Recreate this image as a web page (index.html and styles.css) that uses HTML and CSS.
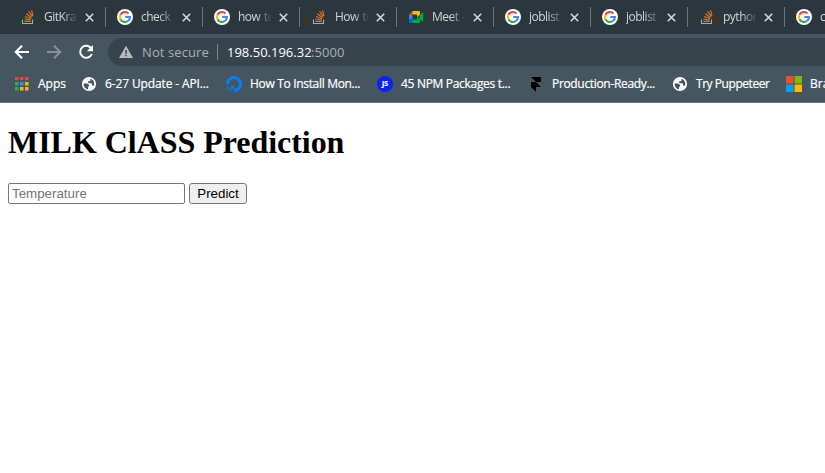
FILE: index.html
```html
<!DOCTYPE html>
<html lang="en">
<head>
<meta charset="utf-8">
<title>MILK ClASS Prediction</title>
<link rel="stylesheet" href="styles.css">
</head>
<body>
<svg class="defs" width="0" height="0">
  <symbol id="google" viewBox="0 0 16 16">
    <circle cx="8" cy="8" r="8" fill="#fff"/>
    <g fill="none" stroke-width="2.1">
      <path d="M11.5 4.4A5 5 0 0 0 3.5 5.8" stroke="#ea4335"/>
      <path d="M3.5 5.8A5 5 0 0 0 3.5 10.2" stroke="#fbbc05"/>
      <path d="M3.5 10.2A5 5 0 0 0 11.2 11.8" stroke="#34a853"/>
      <path d="M11.2 11.8A4.8 4.8 0 0 0 12.9 8H8.2" stroke="#4285f4"/>
    </g>
  </symbol>
  <symbol id="stack" viewBox="0 0 16 16">
    <path d="M2.5 10.5v4h10v-4" fill="none" stroke="#a5abae" stroke-width="1.1"/>
    <path d="M4.4 12.4h6.3M4.5 10l6.3 1M5 7.500l6 2.300M6.400 4.700l5.100 4M8.600 2.400l3.700 5.200M11.500 1.300l1.400 5.600" fill="none" stroke="#e8701a" stroke-width="1.2"/>
  </symbol>
  <symbol id="meet" viewBox="0 0 16 16">
    <path d="M4.500 2v3.500H1z" fill="#ea4335"/>
    <path d="M1 5.500h3.500v5H1z" fill="#2684fc"/>
    <path d="M1 10.500h3.500V14H2a1 1 0 0 1-1-1z" fill="#0066da"/>
    <path d="M4.500 2H11a1 1 0 0 1 1 1v4L9 8V5.500H4.500z" fill="#ffba00"/>
    <path d="M4.500 10.500H9V8l3-2 2.400-2.500q.800-.500.800.300v8.400q0 .800-.800.300L12 10.500V13a1 1 0 0 1-1 1H4.500z" fill="#00ac47"/>
    <path d="M9 8l3-2.500v5z" fill="#00832d"/>
  </symbol>
  <symbol id="globe" viewBox="0 0 16 16">
    <circle cx="8" cy="8" r="7.100" fill="#fff"/>
    <path d="M2.600 7.400h2.800c1.600 0 2.600.900 2.600 2.100s-1 1.300-1 2v1.800c-2.500-.300-4.500-2.600-4.400-5.900z" fill="#455660"/>
    <path d="M9.500 2.700v1.200c0 .900-.700 1.300-1.600 1.300-.900 0-1.100.500-1.100 1.100 0 .700.600.900 1.500.900h1.500c1 0 1.300.700 1.300 1.500 0 .700.400 1 1.200 1h.700c.900-2.800-.400-6-3.500-7z" fill="#455660"/>
  </symbol>
  <symbol id="x" viewBox="0 0 9 9"><path d="M.8.8l7.400 7.400M8.200.8L.8 8.200"/></symbol>
</svg>

<header class="browser">
  <nav class="tabs">
    <div class="tab"><svg class="fav"><use href="#stack"/></svg><span class="name">GitKra</span><svg class="close"><use href="#x"/></svg></div>
    <div class="tab"><svg class="fav"><use href="#google"/></svg><span class="name">check</span><svg class="close"><use href="#x"/></svg></div>
    <div class="tab"><svg class="fav"><use href="#google"/></svg><span class="name">how to</span><svg class="close"><use href="#x"/></svg></div>
    <div class="tab"><svg class="fav"><use href="#stack"/></svg><span class="name">How to</span><svg class="close"><use href="#x"/></svg></div>
    <div class="tab"><svg class="fav"><use href="#meet"/></svg><span class="name">Meet -</span><svg class="close"><use href="#x"/></svg></div>
    <div class="tab"><svg class="fav"><use href="#google"/></svg><span class="name">joblist</span><svg class="close"><use href="#x"/></svg></div>
    <div class="tab"><svg class="fav"><use href="#google"/></svg><span class="name">joblist</span><svg class="close"><use href="#x"/></svg></div>
    <div class="tab"><svg class="fav"><use href="#stack"/></svg><span class="name">pythor</span><svg class="close"><use href="#x"/></svg></div>
    <div class="tab"><svg class="fav"><use href="#google"/></svg><span class="name">c</span></div>
  </nav>

  <div class="toolbar">
    <svg class="nav" viewBox="0 0 16 16"><path d="M15 8H2M8 1.700L1.700 8 8 14.300"/></svg>
    <svg class="nav dim" viewBox="0 0 16 16"><path d="M1 8h13M8 1.700L14.300 8 8 14.300"/></svg>
    <svg class="nav" viewBox="0 0 16 16"><path d="M13.300 4.600A6 6 0 1 0 13.800 10"/><path class="solid" d="M15 1v6.200H8.800z"/></svg>
    <div class="omnibox">
      <svg class="warn" viewBox="0 0 14 14"><path d="M7 .7L14 13H0z" fill="#b5bbbe"/><path d="M6.300 5h1.500v3.700H6.300zM6.300 9.800h1.500v1.500H6.300z" fill="#37444c"/></svg>
      <span class="secure">Not secure</span>
      <span class="bar"></span>
      <span class="host">198.50.196.32</span><span class="port">:5000</span>
    </div>
  </div>

  <nav class="bookmarks">
    <a class="bm apps"><svg viewBox="0 0 16 16"><path d="M1 1h3.500v3H1zM6 1h3.500v3H6zM11 1h3.500v3H11z" fill="#f44336"/><path d="M1 6h3.500v3.500H1zM1 11h3.500v3.500H1z" fill="#34a853"/><path d="M6 6h3.500v3.500H6z" fill="#2196f3"/><path d="M6 11h3.500v3.500H6zM11 6h3.500v3.500H11zM11 11h3.500v3.500H11z" fill="#fbb605"/></svg><span>Apps</span></a>
    <a class="bm update"><svg><use href="#globe"/></svg><span>6-27 Update - API...</span></a>
    <a class="bm mongo"><svg viewBox="0 0 16 16"><path d="M1.500 8A6.500 6.500 0 1 1 8 14.500" fill="none" stroke="#0080ff" stroke-width="3"/><path d="M5 10h3v3H5zM3 13h2v2H3zM1 11h2v2H1z" fill="#0080ff"/></svg><span>How To Install Mon...</span></a>
    <a class="bm npm"><i class="js">JS</i><span>45 NPM Packages t...</span></a>
    <a class="bm prod"><svg viewBox="0 0 16 16"><path d="M3 1h10v5H8zM3 6h5l5 5H8v5l-5-5z" fill="#000"/></svg><span>Production-Ready...</span></a>
    <a class="bm pup"><svg><use href="#globe"/></svg><span>Try Puppeteer</span></a>
    <a class="bm last"><svg viewBox="0 0 16 16"><path d="M0 0h7.500v7.500H0z" fill="#f25022"/><path d="M8.500 0H16v7.500H8.500z" fill="#7fba00"/><path d="M0 8.500h7.500V16H0z" fill="#00a4ef"/><path d="M8.500 8.500H16V16H8.500z" fill="#ffb900"/></svg><span>Bra</span></a>
  </nav>
</header>

<main class="page">
  <h1>MILK ClASS Prediction</h1>
  <form class="form"><input class="field" type="text" placeholder="Temperature"><button class="predict" type="button">Predict</button></form>
</main>
</body>
</html>
```
FILE: styles.css
```css
body {
  margin: 0;
  background: #fff;
  overflow: hidden;
}
.defs { display: block; }
.browser {
  box-sizing: border-box;
  height: 103px;
  overflow: hidden;
  background: #455660;
  border-bottom: 1px solid #64747c;
  font-family: "Open Sans", "Noto Sans", sans-serif;
  color: #fff;
}
.tabs {
  display: flex;
  height: 34px;
  padding-left: 9px;
  background: #2c373d;
}
.tab {
  flex: none;
  box-sizing: border-box;
  display: flex;
  align-items: center;
  width: 97px;
  padding-left: 11px;
  background: linear-gradient(#6b777d, #6b777d) right 7px / 1px 20px no-repeat;
}
.fav { flex: none; width: 16px; height: 16px; }
.name {
  width: 33px;
  margin-left: 8px;
  white-space: nowrap;
  font-size: 12px;
  line-height: 18px;
  letter-spacing: -0.5px;
  word-spacing: 1px;
  color: #d0d5d8;
  -webkit-mask-image: linear-gradient(90deg, #000 55%, rgba(0, 0, 0, 0.1));
  mask-image: linear-gradient(90deg, #000 55%, rgba(0, 0, 0, 0.1));
}
.close {
  width: 9px;
  height: 9px;
  margin-left: 8px;
  fill: none;
  stroke: #d4d8da;
  stroke-width: 1.6;
}
.toolbar {
  display: flex;
  align-items: center;
  height: 36px;
  padding-left: 14px;
}
.nav {
  width: 16px;
  height: 16px;
  margin-right: 16px;
  fill: none;
  stroke: #fff;
  stroke-width: 2;
}
.nav.dim { stroke: #87939a; }
.nav .solid { fill: #fff; stroke: none; }
.omnibox {
  flex: 1;
  display: flex;
  align-items: center;
  height: 28px;
  margin-left: -2px;
  padding-left: 11px;
  border-radius: 14px 0 0 14px;
  background: #37444c;
  font-size: 13px;
  line-height: 20px;
}
.warn { width: 14px; height: 14px; }
.secure { width: 67px; margin-left: 9px; white-space: nowrap; letter-spacing: 0.1px; color: #a9b0b4; }
.bar { width: 1px; height: 16px; margin: 0 9px 0 8px; background: #7d888e; }
.host { width: 84px; white-space: nowrap; }
.port { letter-spacing: 0.1px; color: #a9b0b4; }
.bookmarks {
  display: flex;
  align-items: center;
  height: 28px;
  padding-left: 14px;
}
.bm {
  flex: none;
  display: flex;
  align-items: center;
  gap: 8px;
  white-space: nowrap;
  font-size: 12px;
  line-height: 18px;
  -webkit-text-stroke: 0.2px #fff;
}
.bm svg, .js { flex: none; width: 16px; height: 16px; }
.apps { width: 67px; }
.update { width: 145px; letter-spacing: -0.13px; }
.mongo { width: 151px; letter-spacing: -0.32px; }
.npm { width: 151px; letter-spacing: -0.31px; }
.prod { width: 144px; letter-spacing: -0.33px; }
.pup { width: 114px; letter-spacing: -0.45px; }
.js {
  border-radius: 50%;
  background: #0a22f5;
  font: bold 7px/16px "Open Sans", sans-serif;
  letter-spacing: 0;
  text-align: center;
}
.page { display: flow-root; padding: 0 8px; }
.page h1 {
  margin: 21.44px 0;
  font: bold 32px/37px "Liberation Serif", serif;
  letter-spacing: -0.04px;
  color: #000;
}
.form { display: flex; gap: 4px; }
.field, .predict {
  box-sizing: border-box;
  height: 21px;
  margin: 0;
  border: 1px solid #767676;
  border-radius: 2px;
  font: 13.333px "Liberation Sans", sans-serif;
}
.field { width: 177px; padding: 1px 3px; }
.field::placeholder { color: #757575; }
.predict { width: 58px; padding: 0; border-radius: 3px; background: #efefef; color: #000; }
```
